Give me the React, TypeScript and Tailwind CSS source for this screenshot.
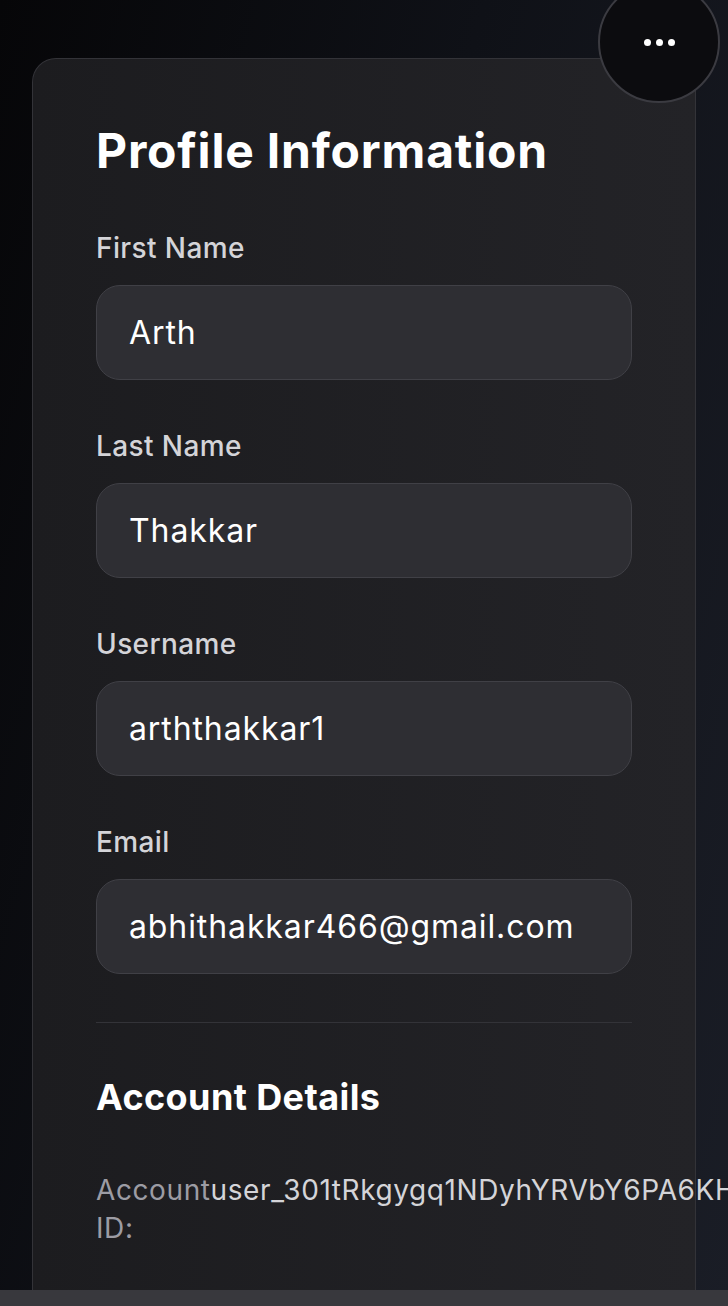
import React from 'react';

const fields = [
    { label: 'First Name', value: 'Arth' },
    { label: 'Last Name', value: 'Thakkar' },
    { label: 'Username', value: 'arththakkar1' },
    { label: 'Email', value: 'abhithakkar466@gmail.com' },
];

const Field: React.FC<{ label: string; value: string }> = ({ label, value }) => (
    <div className="flex flex-col">
        <label className="text-[28px] leading-[40px] font-medium tracking-[0.4px] text-[#d4d4d8]">{label}</label>
        <div className="mt-[17px] h-[95px] flex items-center rounded-[24px] border border-[#404046] bg-[#2e2e33] px-[32px] text-[32px] tracking-[0.9px] text-white">
            {value}
        </div>
    </div>
);

const App: React.FC = () => {
    return (
        <div
            className="relative h-[1306px] w-full overflow-hidden flex flex-col bg-[linear-gradient(105deg,#060608_0%,#0f1117_45%,#1a1d26_100%)]"
            style={{ fontFamily: 'Inter, "Noto Sans", sans-serif' }}
        >
            <div className="flex-1 min-h-0 overflow-hidden pl-[32px] pt-[58px]">
                <div className="w-[664px] h-full rounded-t-[24px] border border-b-0 border-[#333338] bg-[linear-gradient(90deg,#1c1c1f,#232327)] px-[63px] pt-[64px]">
                    <h2 className="text-[48px] leading-[56px] font-bold text-white tracking-[0.8px]">Profile Information</h2>

                    <div className="mt-[49px] flex flex-col gap-[46px]">
                        {fields.map(f => (
                            <Field key={f.label} label={f.label} value={f.value} />
                        ))}
                    </div>

                    <div className="mt-[48px] h-px bg-[#333338]" />

                    <h3 className="mt-[54px] text-[36px] leading-[40px] font-bold tracking-[0.4px] text-white">Account Details</h3>

                    <div className="mt-[54px] flex text-[28px] leading-[38px] tracking-[0.6px]">
                        <span className="text-[#9c9ca4]">Account ID:</span>
                        <span className="text-[#d4d4d8] whitespace-nowrap">user_301tRkgygq1NDyhYRVbY6PA6KHxz</span>
                    </div>
                </div>
            </div>
            <div className="h-[16px] bg-[#38383d]" />

            <button className="absolute left-[598px] top-[-19px] w-[122px] h-[122px] rounded-full border-2 border-[#3b3b41] bg-[#0c0c0f] flex items-center justify-center gap-[5px]">
                <span className="w-[7px] h-[7px] rounded-full bg-white" />
                <span className="w-[7px] h-[7px] rounded-full bg-white" />
                <span className="w-[7px] h-[7px] rounded-full bg-white" />
            </button>
        </div>
    );
};

export default App;
